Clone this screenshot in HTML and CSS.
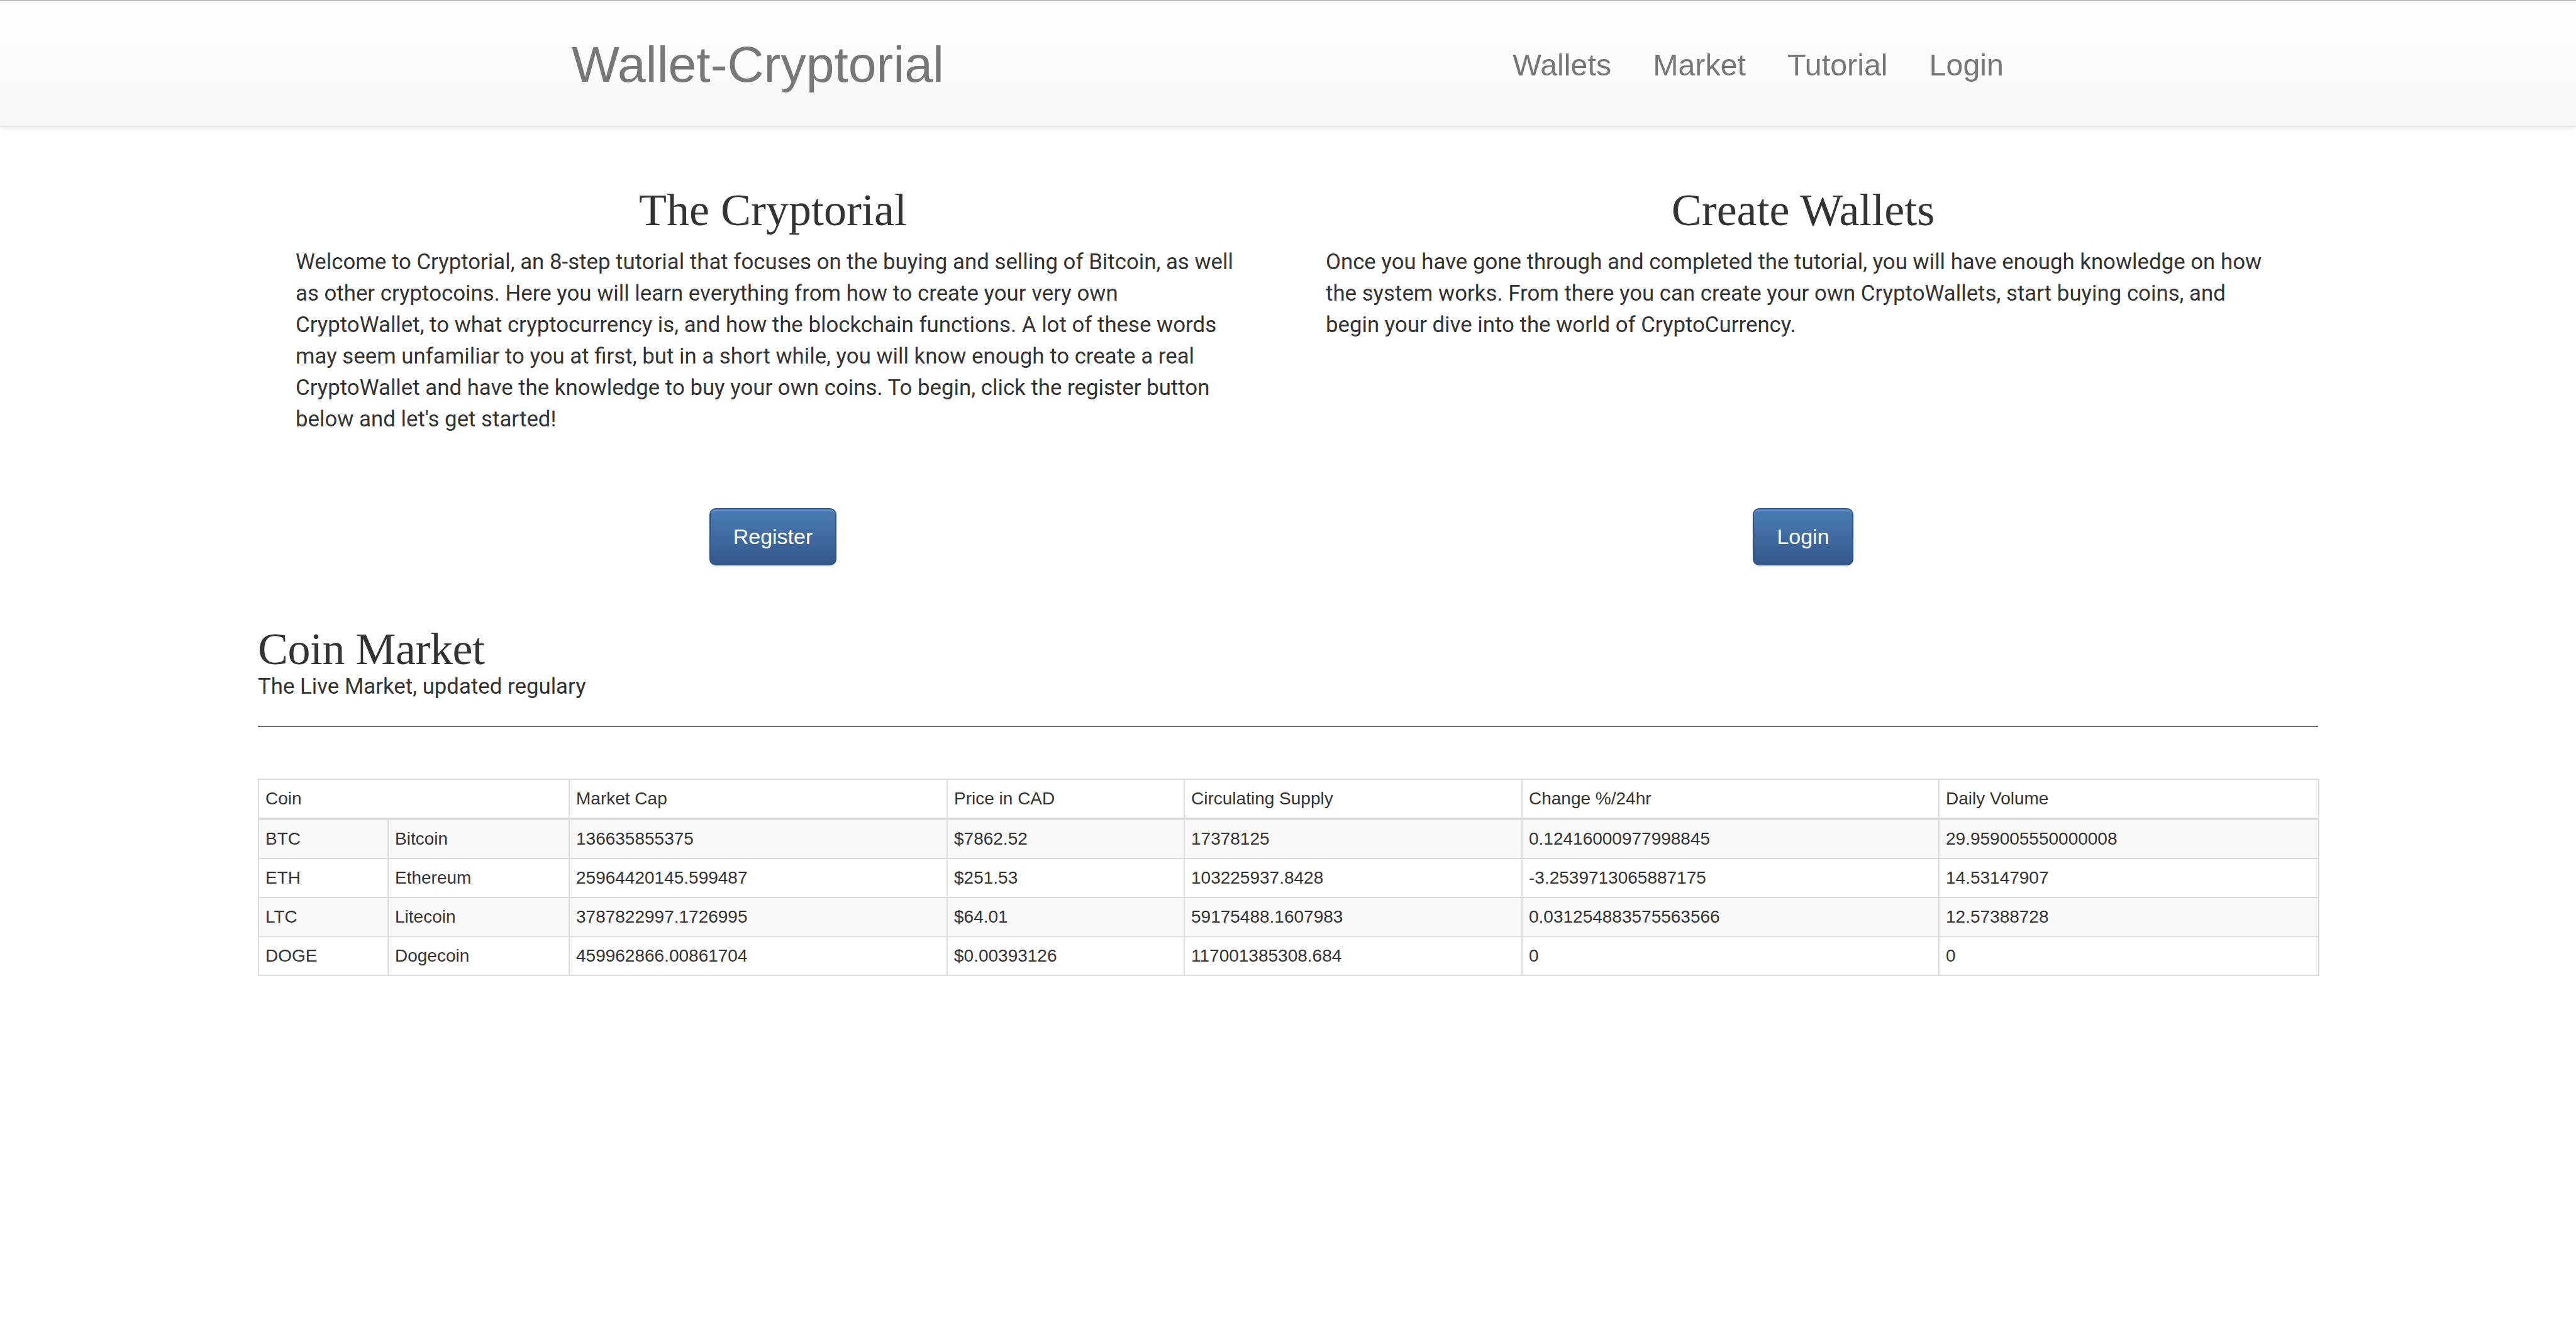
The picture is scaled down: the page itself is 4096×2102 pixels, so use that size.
FILE: index.html
```html
<!DOCTYPE html>
<html lang="en">
<head>
<meta charset="utf-8">
<title>Wallet-Cryptorial</title>
<link rel="stylesheet" href="styles.css">
</head>
<body>
<nav class="navbar">
  <div class="nav-inner">
    <a class="brand" href="#">Wallet-Cryptorial</a>
    <ul class="nav-links">
      <li><a href="#">Wallets</a></li>
      <li><a href="#">Market</a></li>
      <li><a href="#">Tutorial</a></li>
      <li><a href="#">Login</a></li>
    </ul>
  </div>
</nav>

<main class="container">
  <section class="intro">
    <div class="intro-col">
      <h1 class="intro-title">The Cryptorial</h1>
      <p class="intro-text">Welcome to Cryptorial, an 8-step tutorial that focuses on the buying and selling of Bitcoin, as well as other cryptocoins. Here you will learn everything from how to create your very own CryptoWallet, to what cryptocurrency is, and how the blockchain functions. A lot of these words may seem unfamiliar to you at first, but in a short while, you will know enough to create a real CryptoWallet and have the knowledge to buy your own coins. To begin, click the register button below and let's get started!</p>
    </div>
    <div class="intro-col">
      <h1 class="intro-title">Create Wallets</h1>
      <p class="intro-text">Once you have gone through and completed the tutorial, you will have enough knowledge on how the system works. From there you can create your own CryptoWallets, start buying coins, and begin your dive into the world of CryptoCurrency.</p>
    </div>
    <div class="btn-cell"><a class="btn" href="#">Register</a></div>
    <div class="btn-cell"><a class="btn" href="#">Login</a></div>
  </section>

  <section class="market">
    <h2 class="market-title">Coin Market</h2>
    <p class="market-sub">The Live Market, updated regulary</p>
    <hr class="rule">
    <table class="coin-table">
      <colgroup>
        <col class="w-sym"><col class="w-name"><col class="w-cap"><col class="w-price"><col class="w-supply"><col class="w-change"><col class="w-vol">
      </colgroup>
      <thead>
        <tr><th colspan="2">Coin</th><th>Market Cap</th><th>Price in CAD</th><th>Circulating Supply</th><th>Change %/24hr</th><th>Daily Volume</th></tr>
      </thead>
      <tbody>
        <tr><td>BTC</td><td>Bitcoin</td><td>136635855375</td><td>$7862.52</td><td>17378125</td><td>0.12416000977998845</td><td>29.959005550000008</td></tr>
        <tr><td>ETH</td><td>Ethereum</td><td>25964420145.599487</td><td>$251.53</td><td>103225937.8428</td><td>-3.2539713065887175</td><td>14.53147907</td></tr>
        <tr><td>LTC</td><td>Litecoin</td><td>3787822997.1726995</td><td>$64.01</td><td>59175488.1607983</td><td>0.031254883575563566</td><td>12.57388728</td></tr>
        <tr><td>DOGE</td><td>Dogecoin</td><td>459962866.00861704</td><td>$0.00393126</td><td>117001385308.684</td><td>0</td><td>0</td></tr>
      </tbody>
    </table>
  </section>
</main>
</body>
</html>
```

FILE: styles.css
```css
html, body {
  margin: 0;
  padding: 0;
  background: #fff;
}

body {
  font-family: "Liberation Sans", Arial, Helvetica, sans-serif;
  color: #333;
}

a { text-decoration: none; }

/* ---------- Navbar ---------- */
.navbar {
  height: 198px;
  border-top: 2px solid #bdbdbd;
  border-bottom: 2px solid #e4e4e4;
  background: linear-gradient(to bottom, #ffffff 0%, #f7f7f7 100%);
  box-shadow: 0 2px 10px rgba(0, 0, 0, 0.08);
}

.nav-inner {
  width: 2370px;
  margin: 0 auto;
  display: flex;
  justify-content: space-between;
  align-items: flex-start;
  box-sizing: border-box;
  padding: 0 15px 0 46px;
}

.brand {
  margin-top: 60px;
  font-size: 80.5px;
  line-height: 80px;
  color: #777;
}

.nav-links {
  list-style: none;
  margin: 77px 0 0;
  padding: 0;
  display: flex;
}

.nav-links a {
  display: block;
  padding: 0 33px;
  font-size: 48.4px;
  line-height: 48px;
  color: #777;
}

.nav-links li:last-child a {
  padding-right: 32px;
}

/* ---------- Main ---------- */
.container {
  width: 3276px;
  margin: 0 auto;
}

.intro {
  display: grid;
  grid-template-columns: 1fr 1fr;
  padding-top: 94px;
}

.intro-col {
  padding: 0 60px;
}

.intro-title {
  margin: 0;
  text-align: center;
  font-family: "Liberation Serif", "Times New Roman", serif;
  font-weight: normal;
  font-size: 72px;
  line-height: 77px;
  color: #333;
}

.intro-text {
  margin: 18px 0 0;
  font-family: Roboto, "Noto Sans", sans-serif;
  font-size: 34.8px;
  line-height: 50px;
  color: #333;
}

.btn-cell {
  display: flex;
  justify-content: center;
  padding-top: 117px;
}

.btn {
  display: inline-block;
  box-sizing: border-box;
  height: 91px;
  padding: 0 36px;
  font-family: "Liberation Sans", Arial, Helvetica, sans-serif;
  font-size: 34px;
  line-height: 87px;
  color: #fff;
  border: 2px solid #2f5482;
  border-radius: 10px;
  background: linear-gradient(to bottom, #4a7cb6 0%, #35588a 100%);
  box-shadow: inset 0 2px 0 rgba(255, 255, 255, 0.2), 0 2px 3px rgba(0, 0, 0, 0.12);
}

/* ---------- Market ---------- */
.market {
  padding-top: 94px;
}

.market-title {
  margin: 0;
  font-family: "Liberation Serif", "Times New Roman", serif;
  font-weight: normal;
  font-size: 72px;
  line-height: 79px;
  color: #333;
  letter-spacing: -0.5px;
}

.market-sub {
  margin: 0;
  font-family: Roboto, "Noto Sans", sans-serif;
  font-size: 34.8px;
  line-height: 38px;
  color: #333;
}

.rule {
  margin: 44px 0 0;
  border: 0;
  border-top: 2px solid #6a6a6a;
  height: 0;
}

.coin-table {
  margin-top: 82px;
  width: 3276px;
  table-layout: fixed;
  border-collapse: collapse;
  border: 2px solid #ddd;
  font-size: 28px;
  line-height: 40px;
  color: #333;
}

.coin-table th,
.coin-table td {
  padding: 10px;
  text-align: left;
  font-weight: normal;
  border: 2px solid #ddd;
  white-space: nowrap;
}

.coin-table thead th {
  border-bottom: 4px solid #ddd;
}

.coin-table tbody tr:nth-child(odd) {
  background: #f9f9f9;
}

.w-sym { width: 206px; }
.w-name { width: 288px; }
.w-cap { width: 601px; }
.w-price { width: 377px; }
.w-supply { width: 537px; }
.w-change { width: 663px; }
.w-vol { width: 604px; }
```
